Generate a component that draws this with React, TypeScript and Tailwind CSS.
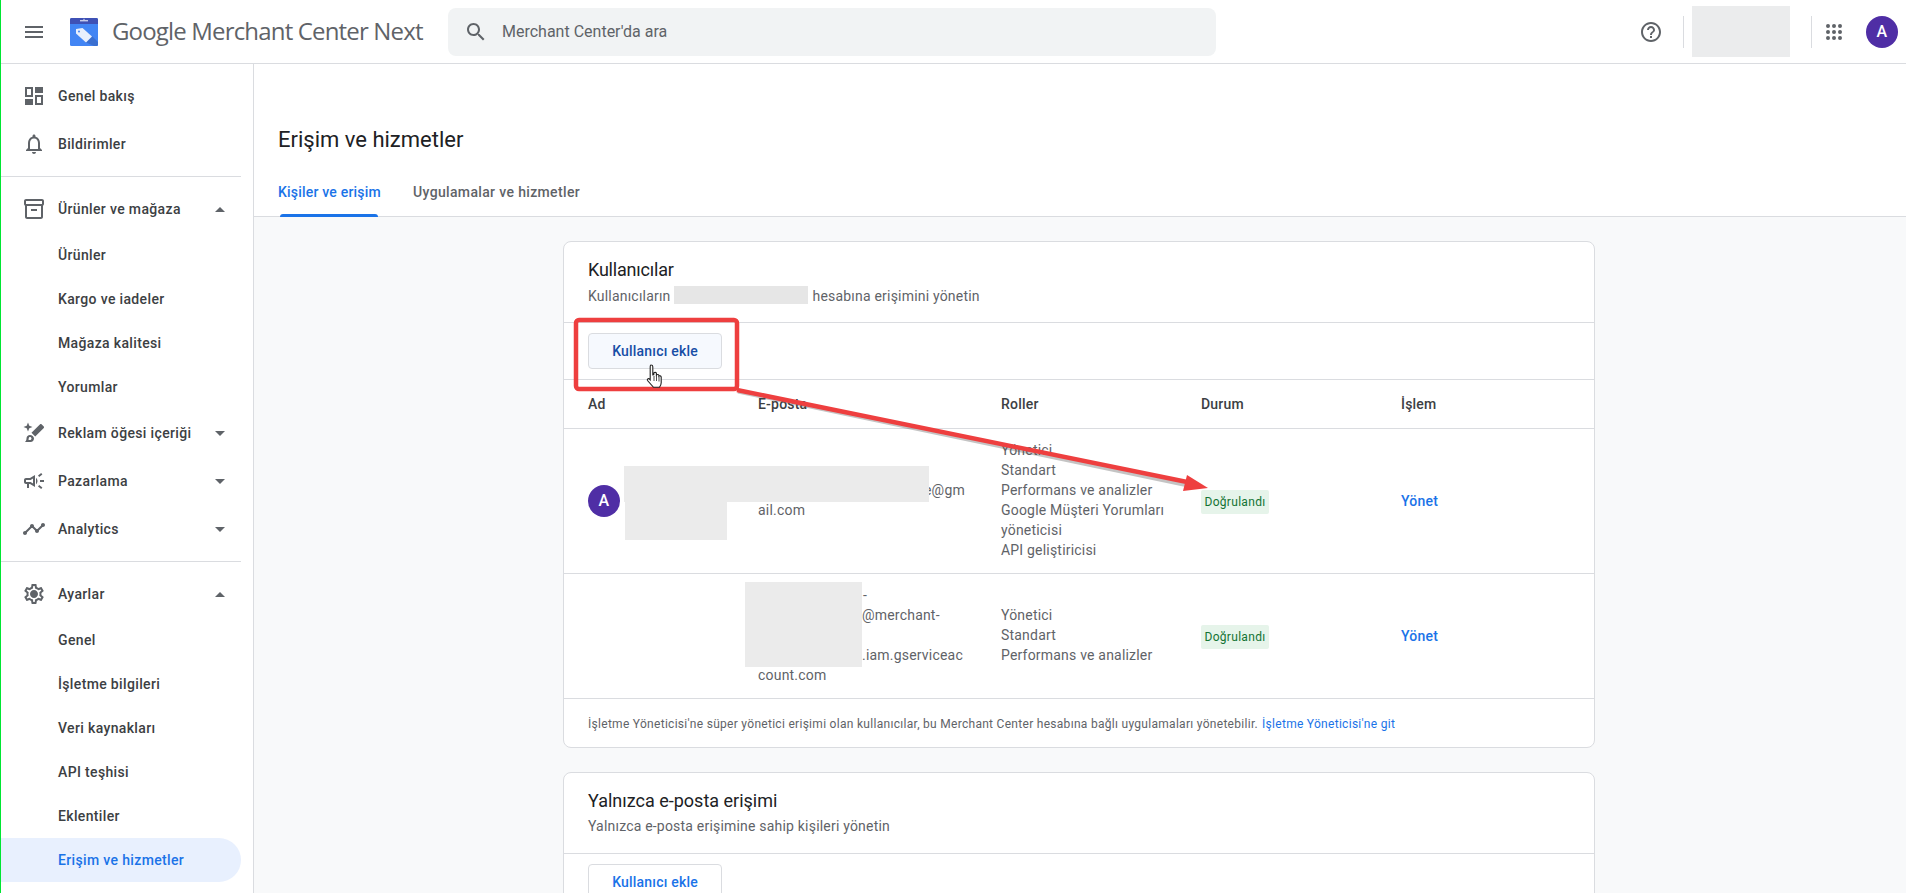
const F = "font-['Roboto',sans-serif] tracking-[0.2px]";

function I({ d, cls = "w-6 h-6", fill = "#5f6368" }: { d: string; cls?: string; fill?: string }) {
  return (
    <svg viewBox="0 0 24 24" className={cls} fill={fill}>
      <path d={d} />
    </svg>
  );
}

const icons = {
  menu: "M3 18h18v-2H3v2zm0-5h18v-2H3v2zm0-7v2h18V6H3z",
  search: "M15.5 14h-.79l-.28-.27C15.41 12.59 16 11.11 16 9.5 16 5.91 13.09 3 9.5 3S3 5.91 3 9.5 5.91 16 9.5 16c1.61 0 3.09-.59 4.23-1.57l.27.28v.79l5 4.99L20.49 19l-4.99-5zm-6 0C7.01 14 5 11.99 5 9.5S7.01 5 9.5 5 14 7.01 14 9.5 11.99 14 9.5 14z",
  help: "M11 18h2v-2h-2v2zm1-16C6.48 2 2 6.48 2 12s4.48 10 10 10 10-4.48 10-10S17.52 2 12 2zm0 18c-4.41 0-8-3.59-8-8s3.59-8 8-8 8 3.59 8 8-3.59 8-8 8zm0-14c-2.21 0-4 1.79-4 4h2c0-1.1.9-2 2-2s2 .9 2 2c0 2-3 1.75-3 5h2c0-2.25 3-2.5 3-5 0-2.21-1.79-4-4-4z",
  apps: "M6 8a2 2 0 1 0 0-4 2 2 0 0 0 0 4zm6 0a2 2 0 1 0 0-4 2 2 0 0 0 0 4zm6 0a2 2 0 1 0 0-4 2 2 0 0 0 0 4zM6 14a2 2 0 1 0 0-4 2 2 0 0 0 0 4zm6 0a2 2 0 1 0 0-4 2 2 0 0 0 0 4zm6 0a2 2 0 1 0 0-4 2 2 0 0 0 0 4zM6 20a2 2 0 1 0 0-4 2 2 0 0 0 0 4zm6 0a2 2 0 1 0 0-4 2 2 0 0 0 0 4zm6 0a2 2 0 1 0 0-4 2 2 0 0 0 0 4z",
  dashboard: "M3 3h8v10H3V3zm2 2v6h4V5H5zM13 3h8v6h-8V3zM13 11h8v10h-8V11zm2 2v6h4v-6h-4zM3 15h8v6H3v-6z",
  bell: "M12 22c1.1 0 2-.9 2-2h-4c0 1.1.9 2 2 2zm6-6v-5c0-3.07-1.63-5.64-4.5-6.32V4c0-.83-.67-1.5-1.5-1.5s-1.5.67-1.5 1.5v.68C7.64 5.36 6 7.92 6 11v5l-2 2v1h16v-1l-2-2zm-2 1H8v-6c0-2.48 1.51-4.5 4-4.5s4 2.02 4 4.5v6z",
  inventory: "M20 2H4c-1 0-2 .9-2 2v3.01c0 .72.43 1.34 1 1.69V20c0 1.1 1.1 2 2 2h14c.9 0 2-.9 2-2V8.7c.57-.35 1-.97 1-1.69V4c0-1.1-1-2-2-2zm-1 18H5V9h14v11zm1-13H4V4h16v3zM9 12h6v2H9z",
  brush: "M6 1.5l1.3 3.2 3.2 1.3-3.2 1.3L6 10.5 4.7 7.3 1.5 6l3.2-1.3zM19.5 3.2l2.3 2.3c.4.4.4 1 0 1.4l-8.6 8.6-3.7-3.7 8.6-8.6c.4-.4 1-.4 1.4 0zM8 14c-2 0-3.5 1.5-3.5 3.5 0 1.6-.6 2.7-1.5 3.5h5.5c2.2 0 3.5-1.6 3.5-3.5S10 14 8 14zm0 5H6.5c.1-.5.2-1 .2-1.5C6.7 16.7 7.2 16 8 16s1.5.7 1.5 1.5S8.800 19 8 19z",
  campaign: "M18 11v2h4v-2h-4zm-2 6.61c.96.71 2.21 1.65 3.2 2.39.4-.53.8-1.07 1.2-1.6-.99-.74-2.24-1.68-3.2-2.4-.4.54-.8 1.08-1.2 1.61zM20.4 5.6c-.4-.53-.8-1.07-1.2-1.6-.99.74-2.24 1.68-3.2 2.4.4.53.8 1.07 1.2 1.6.96-.72 2.21-1.65 3.2-2.4zM4 9c-1.1 0-2 .9-2 2v2c0 1.1.9 2 2 2h1v4h2v-4h1l5 3V6L8 9H4zm5.03 1.71L11 9.53v4.94l-1.97-1.18-.48-.29H4v-2h4.55l.48-.29zM15.5 12c0-1.33-.58-2.53-1.5-3.35v6.69c.92-.81 1.5-2.01 1.5-3.34z",
  timeline: "M23 8c0 1.1-.9 2-2 2-.18 0-.35-.02-.51-.07l-3.56 3.55c.05.16.07.34.07.52 0 1.1-.9 2-2 2s-2-.9-2-2c0-.18.02-.36.07-.52l-2.55-2.55c-.16.05-.34.07-.52.07s-.36-.02-.52-.07l-4.55 4.56c.05.16.07.33.07.51 0 1.1-.9 2-2 2s-2-.9-2-2 .9-2 2-2c.18 0 .35.02.51.07l4.56-4.55C8.02 9.36 8 9.18 8 9c0-1.1.9-2 2-2s2 .9 2 2c0 .18-.02.36-.07.52l2.55 2.55c.16-.05.34-.07.52-.07s.36.02.52.07l3.55-3.56C19.02 8.35 19 8.18 19 8c0-1.1.9-2 2-2s2 .9 2 2z",
  settings: "M19.43 12.98c.04-.32.07-.64.07-.98 0-.34-.03-.66-.07-.98l2.11-1.65c.19-.15.24-.42.12-.64l-2-3.46c-.09-.16-.26-.25-.44-.25-.06 0-.12.01-.17.03l-2.49 1c-.52-.4-1.08-.73-1.69-.98l-.38-2.65C14.46 2.18 14.25 2 14 2h-4c-.25 0-.46.18-.49.42l-.38 2.65c-.61.25-1.17.59-1.69.98l-2.49-1c-.06-.02-.12-.03-.18-.03-.17 0-.34.09-.43.25l-2 3.46c-.13.22-.07.49.12.64l2.11 1.65c-.04.32-.07.65-.07.98 0 .33.03.66.07.98l-2.11 1.65c-.19.15-.24.42-.12.64l2 3.46c.09.16.26.25.44.25.06 0 .12-.01.17-.03l2.49-1c.52.4 1.08.73 1.69.98l.38 2.65c.03.24.24.42.49.42h4c.25 0 .46-.18.49-.42l.38-2.65c.61-.25 1.17-.59 1.69-.98l2.49 1c.06.02.12.03.18.03.17 0 .34-.09.43-.25l2-3.46c.12-.22.07-.49-.12-.64l-2.11-1.65zm-1.98-1.71c.04.31.05.52.05.73 0 .21-.02.43-.05.73l-.14 1.13.89.7 1.08.84-.7 1.21-1.27-.51-1.04-.42-.9.68c-.43.32-.84.56-1.25.73l-1.06.43-.16 1.13-.2 1.35h-1.4l-.19-1.35-.16-1.13-1.06-.43c-.43-.18-.83-.41-1.23-.71l-.91-.7-1.06.43-1.27.51-.7-1.21 1.08-.84.89-.7-.14-1.13c-.03-.31-.05-.54-.05-.74s.02-.43.05-.73l.14-1.13-.89-.7-1.08-.84.7-1.21 1.27.51 1.04.42.9-.68c.43-.32.84-.56 1.25-.73l1.06-.43.16-1.13.2-1.35h1.39l.19 1.35.16 1.13 1.06.43c.43.18.83.41 1.23.71l.91.7 1.06-.43 1.27-.51.7 1.21-1.07.85-.89.7.14 1.13zM12 8c-2.21 0-4 1.79-4 4s1.79 4 4 4 4-1.79 4-4-1.79-4-4-4z",
};

function Caret({ up }: { up?: boolean }) {
  return (
    <svg viewBox="0 0 10 5" className="w-[10px] h-[5px] ml-auto mr-[16px]" fill="#5f6368">
      <path d={up ? "M0 5l5-5 5 5z" : "M0 0l5 5 5-5z"} />
    </svg>
  );
}

function NavMain({ icon, label, caret }: { icon: string; label: string; caret?: "up" | "down" }) {
  return (
    <div className="h-12 flex items-center pl-[22px] text-[14px] font-medium tracking-[0.35px] text-[#3c4043] w-[241px]">
      <I d={icon} />
      <span className="ml-[12px]">{label}</span>
      {caret && <Caret up={caret === "up"} />}
    </div>
  );
}

function NavSub({ label, active }: { label: string; active?: boolean }) {
  return (
    <div
      className={
        active
          ? "h-11 flex items-center pl-[58px] text-[14px] font-medium tracking-[0.35px] w-[241px] bg-[#e8f0fe] text-[#1a73e8] rounded-r-[22px]"
          : "h-11 flex items-center pl-[58px] text-[14px] font-medium tracking-[0.35px] w-[241px] text-[#3c4043]"
      }
    >
      {label}
    </div>
  );
}

function Blur({ cls }: { cls: string }) {
  return <div className={"absolute bg-[#ebebeb] " + cls} />;
}

function Lines({ items }: { items: string[] }) {
  return (
    <div className="text-[14px] leading-[20px] text-[#5f6368] pb-[2px]">
      {items.map((t, i) => (
        <div key={i} className="min-h-[20px]">{t}</div>
      ))}
    </div>
  );
}

function Badge() {
  return (
    <span className="inline-flex items-center h-6 bg-[#e6f4ea] text-[#137333] text-[12px] tracking-[0.3px] rounded-[2px] w-[68px] justify-center">
      Doğrulandı
    </span>
  );
}

function Manage() {
  return <span className="text-[14px] font-medium text-[#1a73e8]">Yönet</span>;
}

const grid = "grid grid-cols-[170px_243px_200px_200px_1fr] pl-[24px] items-center";

export default function App() {
  return (
    <div className={"relative w-[1906px] h-[893px] overflow-hidden bg-white " + F}>
      <div className="absolute left-0 top-0 bottom-0 w-[1px] bg-[#00e632]" />

      {/* Top bar */}
      <header className="h-[64px] flex items-center border-b border-[#dadce0] pl-[22px] pr-[8px]">
        <I d={icons.menu} />
        <svg viewBox="0 0 28 28" className="w-[28px] h-[28px] ml-[24px]">
          <rect x="0" y="0" width="28" height="28" rx="1.5" fill="#4285f4" />
          <path d="M0 1.500A1.500 1.500 0 0 1 1.500 0h25A1.500 1.500 0 0 1 28 1.500V6H0z" fill="#3f51b5" />
          <rect x="10" y="2" width="8" height="1.4" fill="#c5cae9" />
          <rect x="13.400" y="0.800" width="1.200" height="1.600" fill="#c5cae9" />
          <path d="M22 18l6 6v2.500a1.500 1.500 0 0 1-1.500 1.500H24l-9-4z" fill="#3a6fd0" />
          <path d="M6 11l6.500-1 9.500 8.500-6 6-10-9z" fill="#e8effc" />
          <circle cx="9" cy="13.500" r="1" fill="#4285f4" />
        </svg>
        <div className="ml-[14px] w-[320px] -mt-[2px] font-['Open_Sans',sans-serif] font-medium text-[24px] leading-none whitespace-nowrap text-[#5f6368] tracking-[-0.83px]">
          Google Merchant Center Next
        </div>
        <div className="ml-[16px] w-[768px] h-[48px] bg-[#f1f3f4] rounded-[8px] flex items-center pl-[16px]">
          <I d={icons.search} />
          <span className="ml-[14px] text-[16px] tracking-normal text-[#5f6368]">Merchant Center'da ara</span>
        </div>
        <div className="ml-auto flex items-center">
          <I d={icons.help} />
          <div className="w-px h-8 bg-[#dadce0] ml-[20px]" />
          <div className="w-[98px] h-[51px] ml-[8px] bg-[#ebeced]" />
          <div className="w-px h-8 bg-[#dadce0] ml-[21px]" />
          <I d={icons.apps} cls="w-[24px] h-[24px] ml-[10px]" />
          <div className="ml-[20px] w-8 h-8 rounded-full bg-[#4f2ea5] text-white text-[16px] font-medium flex items-center justify-center">
            A
          </div>
        </div>
      </header>

      <div className="flex h-[829px]">
        {/* Sidebar */}
        <aside className="w-[254px] shrink-0 border-r border-[#dadce0] pt-[8px]">
          <NavMain icon={icons.dashboard} label="Genel bakış" />
          <NavMain icon={icons.bell} label="Bildirimler" />
          <div className="w-[241px] border-t border-[#dadce0] mt-[8px] mb-[8px]" />
          <NavMain icon={icons.inventory} label="Ürünler ve mağaza" caret="up" />
          <NavSub label="Ürünler" />
          <NavSub label="Kargo ve iadeler" />
          <NavSub label="Mağaza kalitesi" />
          <NavSub label="Yorumlar" />
          <NavMain icon={icons.brush} label="Reklam öğesi içeriği" caret="down" />
          <NavMain icon={icons.campaign} label="Pazarlama" caret="down" />
          <NavMain icon={icons.timeline} label="Analytics" caret="down" />
          <div className="w-[241px] border-t border-[#dadce0] mt-[8px] mb-[8px]" />
          <NavMain icon={icons.settings} label="Ayarlar" caret="up" />
          <NavSub label="Genel" />
          <NavSub label="İşletme bilgileri" />
          <NavSub label="Veri kaynakları" />
          <NavSub label="API teşhisi" />
          <NavSub label="Eklentiler" />
          <NavSub label="Erişim ve hizmetler" active />
        </aside>

        {/* Main */}
        <main className="flex-1 min-w-0 bg-[#f8f9fa]">
          <div className="bg-white h-[153px] border-b border-[#dadce0] pl-[24px]">
            <h1 className="pt-[61px] text-[22px] leading-[30px] font-normal tracking-normal text-[#202124]">Erişim ve hizmetler</h1>
            <div className="flex mt-[23px] text-[14px] font-medium">
              <div className="relative h-[39px] pb-[11px] text-[#1a73e8] flex items-center w-[102px] mr-[33px] whitespace-nowrap tracking-[0.2px]">
                Kişiler ve erişim
                <div className="absolute left-[2px] right-[2px] bottom-0 h-[3px] bg-[#1a73e8] rounded-t-[3px]" />
              </div>
              <div className="h-[39px] pb-[11px] flex items-center text-[#5f6368] tracking-[0.35px]">Uygulamalar ve hizmetler</div>
            </div>
          </div>

          <div className="ml-[309px] w-[1032px] pt-[24px]">
            {/* Card 1 */}
            <section className="bg-white border border-[#dadce0] rounded-[8px] h-[507px]">
              <div className="h-[81px] pl-[24px] pt-[15px] border-b border-[#dadce0]">
                <div className="text-[18px] leading-[26px] tracking-[-0.2px] text-[#202124]">Kullanıcılar</div>
                <div className="mt-[3px] text-[14px] leading-[20px] text-[#5f6368] flex">
                  <span>Kullanıcıların</span>
                  <span className="w-[134px] h-[18px] ml-[3px] mr-[5px] bg-[#e6e6e6]" />
                  <span>hesabına erişimini yönetin</span>
                </div>
              </div>
              <div className="h-[57px] pl-[24px] pt-[10px] border-b border-[#dadce0]">
                <div className="w-[134px] h-[36px] rounded-[4px] border border-[#dadce0] bg-[#f6f9fe] flex items-center justify-center text-[14px] font-medium text-[#174ea6]">
                  Kullanıcı ekle
                </div>
              </div>
              <div className={grid + " h-[49px] border-b border-[#dadce0] text-[14px] font-medium text-[#3c4043]"}>
                <div>Ad</div>
                <div>E-posta</div>
                <div>Roller</div>
                <div>Durum</div>
                <div>İşlem</div>
              </div>
              <div className={grid + " h-[145px] border-b border-[#dadce0]"}>
                <div className="relative">
                  <div className="w-8 h-8 rounded-full bg-[#4f2ea5] text-white text-[16px] font-medium flex items-center justify-center">
                    A
                  </div>
                  <Blur cls="left-[36px] top-[-19px] w-[305px] h-[36px] z-10" />
                  <Blur cls="left-[37px] top-[17px] w-[102px] h-[38px] z-10" />
                </div>
                <div className="text-[14px] leading-[20px] text-[#5f6368] pb-[2px]">
                  <div className="pl-[166px]">e@gm</div>
                  <div>ail.com</div>
                </div>
                <Lines items={["Yönetici", "Standart", "Performans ve analizler", "Google Müşteri Yorumları", "yöneticisi", "API geliştiricisi"]} />
                <div><Badge /></div>
                <Manage />
              </div>
              <div className={grid + " h-[125px] border-b border-[#dadce0]"}>
                <div />
                <div className="relative text-[14px] leading-[20px] text-[#5f6368] pb-[2px]">
                  <div className="pl-[105px]">-</div>
                  <div className="pl-[104px]">@merchant-</div>
                  <div className="h-[20px]" />
                  <div className="pl-[104px]">.iam.gserviceac</div>
                  <div>count.com</div>
                  <Blur cls="left-[-13px] top-[-3px] w-[117px] h-[85px]" />
                </div>
                <Lines items={["Yönetici", "Standart", "Performans ve analizler"]} />
                <div><Badge /></div>
                <Manage />
              </div>
              <div className="h-[50px] pl-[24px] flex items-center text-[12px] tracking-[0.29px] text-[#5f6368]">
                İşletme Yöneticisi'ne süper yönetici erişimi olan kullanıcılar, bu Merchant Center hesabına bağlı uygulamaları yönetebilir.
                <span className="ml-[4px] text-[#1a73e8]">İşletme Yöneticisi'ne git</span>
              </div>
            </section>

            {/* Card 2 */}
            <section className="mt-[24px] bg-white border border-[#dadce0] rounded-[8px] h-[200px]">
              <div className="h-[81px] pl-[24px] pt-[15px] border-b border-[#dadce0]">
                <div className="text-[18px] leading-[26px] tracking-normal text-[#202124]">Yalnızca e-posta erişimi</div>
                <div className="mt-[2px] text-[14px] leading-[20px] text-[#5f6368]">Yalnızca e-posta erişimine sahip kişileri yönetin</div>
              </div>
              <div className="pl-[24px] pt-[10px]">
                <div className="w-[134px] h-[36px] rounded-[4px] border border-[#dadce0] flex items-center justify-center text-[14px] font-medium text-[#1a73e8]">
                  Kullanıcı ekle
                </div>
              </div>
            </section>
          </div>
        </main>
      </div>

      {/* Annotation overlay */}
      <svg className="absolute inset-0 w-[1906px] h-[893px] pointer-events-none" viewBox="0 0 1906 893">
        <path d="M738 391.500 L1186 485" stroke="#555" strokeOpacity="0.35" strokeWidth="4" fill="none" />
        <path d="M737 390 L1192 483" stroke="#ee3f3f" strokeWidth="4.500" fill="none" />
        <path d="M1187 475 L1208 488 L1183 491z" fill="#ee3f3f" />
        <rect x="576" y="320" width="161" height="69" rx="3" fill="none" stroke="#ee3f3f" strokeWidth="4.500" />
        <g transform="translate(646 364)">
          <path d="M5 1c1.200 0 1.800.8 1.800 1.800v8l1-.1V9c.6-.9 2-.9 2.600 0v2c.7-.8 2-.7 2.500.2v1c.8-.7 2-.4 2.300.6v6c0 2-1 3.500-1.800 4.500H7.500L1.500 16.500c-.6-1 .4-2.300 1.700-1.700l1 1V2.800c0-1 .4-1.800.8-1.800z" fill="#fff" stroke="#222" strokeWidth="1.100" />
          <path d="M8 12v5M10.500 11v6M13 12.500v5" stroke="#222" strokeWidth=".8" />
        </g>
      </svg>
    </div>
  );
}
